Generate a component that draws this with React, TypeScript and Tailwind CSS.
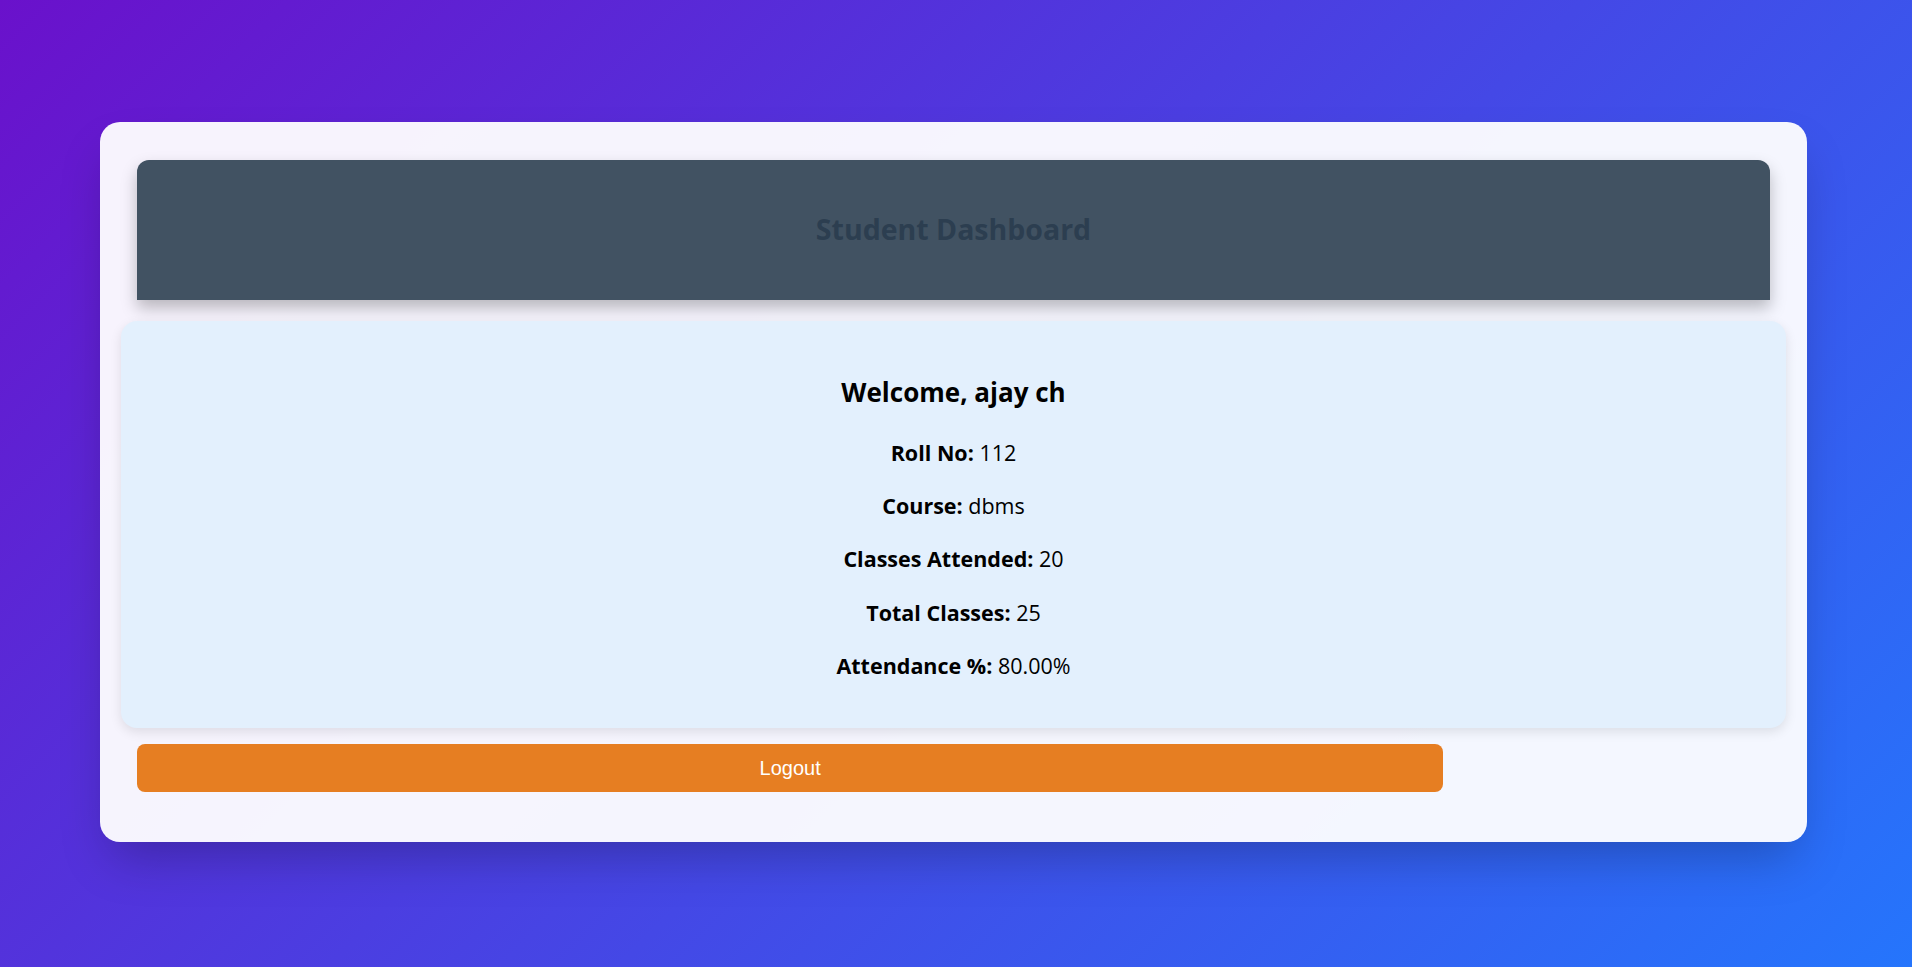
const student = {
  name: "ajay ch",
  rollNo: "112",
  course: "dbms",
  attended: 20,
  total: 25,
}

function InfoLine({ label, value }: { label: string; value: string | number }) {
  return (
    <p className="text-[21.5px] leading-[53.3px]">
      <strong className="font-bold">{label}:</strong> {value}
    </p>
  )
}

export default function App() {
  const percent = ((student.attended / student.total) * 100).toFixed(2)

  return (
    <div className="flex min-h-screen items-center justify-center bg-[linear-gradient(135deg,#6a11cb,#2575fc)] font-['Open_Sans',sans-serif]">
      <div className="mr-[5px] mb-[3px] w-[1707px] rounded-[20px] bg-white/95 px-[37px] pt-[38px] pb-[50px] shadow-2xl">
        <header className="flex h-[140px] items-center justify-center rounded-t-xl bg-[#415262] shadow-[0_8px_16px_rgba(0,0,0,0.25)]">
          <h2 className="text-[28.5px] font-bold text-[#2c3e50]">Student Dashboard</h2>
        </header>

        <section className="-mx-4 mt-[21px] rounded-2xl bg-[#e3f0fd] pt-[53px] pb-[36px] text-center text-black shadow-[0_4px_12px_rgba(0,0,0,0.1)]">
          <h3 className="text-[26px] leading-[36px] font-bold">Welcome, {student.name}</h3>
          <div className="mt-[16px]">
            <InfoLine label="Roll No" value={student.rollNo} />
            <InfoLine label="Course" value={student.course} />
            <InfoLine label="Classes Attended" value={student.attended} />
            <InfoLine label="Total Classes" value={student.total} />
            <InfoLine label="Attendance %" value={`${percent}%`} />
          </div>
        </section>

        <button className="mt-4 h-12 w-4/5 rounded-lg bg-[#e67e22] font-['Liberation_Sans',Arial,sans-serif] text-[20px] text-white">
          Logout
        </button>
      </div>
    </div>
  )
}
